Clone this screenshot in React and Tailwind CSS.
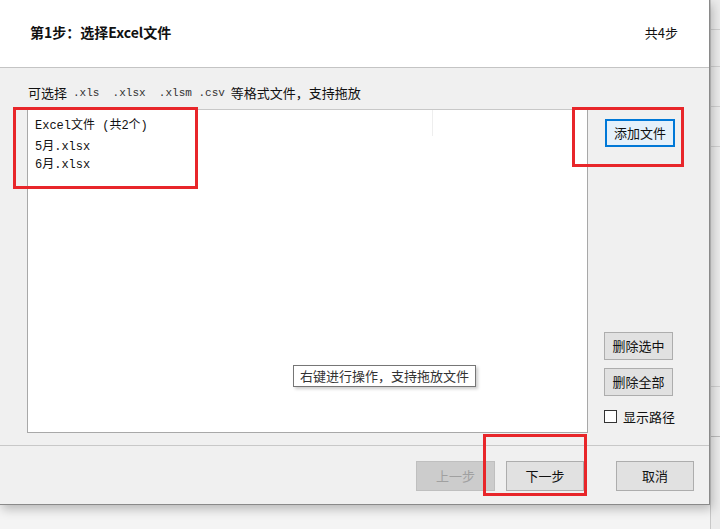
import React from 'react'

const cjk = { fontFamily: '"Noto Sans CJK SC", "Noto Sans", sans-serif' }
const mono = { fontFamily: '"Liberation Mono", "Noto Sans CJK SC", monospace' }

const WinButton = ({ children, className = '', disabled = false, focused = false }) => (
  <div
    className={`flex items-center justify-center border text-[13px] ${
      disabled
        ? 'bg-[#cccccc] border-[#bfbfbf] text-[#a0a0a0]'
        : focused
        ? 'bg-[#e5f1fb] border-[#0078d7] border-2 text-[#111]'
        : 'bg-[#e1e1e1] border-[#adadad] text-[#111]'
    } ${className}`}
  >
    {children}
  </div>
)

const App = () => {
  return (
    <div className="relative w-[720px] h-[529px] bg-[#f4f4f4] overflow-hidden" style={cjk}>
      {/* spreadsheet edge behind dialog */}
      <div className="absolute right-0 top-0 w-[10px] h-full bg-[#ececec] border-l border-[#c8c8c8]">
        <div className="h-[30px] border-b border-[#d0d0d0]" />
        <div className="h-[37px] border-b border-[#d0d0d0]" />
        <div className="h-[40px] border-b border-[#d0d0d0]" />
        <div className="h-[40px] border-b border-[#d0d0d0]" />
        <div className="h-[240px] border-b border-[#d0d0d0]" />
        <div className="h-[50px] border-b border-[#bbbbbb]" />
      </div>

      {/* dialog window */}
      <div className="relative w-[710px] h-[505px] flex flex-col bg-[#f0f0f0] border-r border-b border-[#8a8a8a] shadow-[2px_4px_10px_rgba(0,0,0,0.25)]">
        {/* header */}
        <div className="h-[68px] bg-white border-b border-[#c4c4c4] flex items-center justify-between pl-[30px] pr-[31px] pb-[2px]">
          <span className="text-[14px] font-bold text-[#111]">第1步：选择Excel文件</span>
          <span className="text-[13px] text-[#111]">共4步</span>
        </div>

        {/* body */}
        <div className="flex-1 flex flex-col pt-[15px]">
          <div className="pl-[28px] text-[13px] text-[#111] flex items-center gap-[6px] h-[20px]">
            <span>可选择</span>
            <span className="text-[11px] text-[#333]" style={mono}>.xls&nbsp; .xlsx&nbsp; .xlsm .csv</span>
            <span>等格式文件，支持拖放</span>
          </div>

          <div className="flex mt-[6px]">
            {/* file list */}
            <div className="relative ml-[27px] w-[561px] h-[324px] bg-white border border-[#a8a8a8] border-t-[#c8c8c8]">
              <div className="absolute left-[404px] top-0 w-px h-[26px] bg-[#eeeeee]" />
              <div className="pl-[7px] pt-[7px] text-[12px] text-[#111] leading-[18px]" style={mono}>
                <div className="mb-[3px]">Excel文件 (共2个)</div>
                <div>5月.xlsx</div>
                <div>6月.xlsx</div>
              </div>
              <div className="absolute left-[265px] top-[255px] h-[22px] px-[6px] flex items-center bg-white border border-[#767676] text-[13px] text-[#333] shadow-[2px_2px_3px_rgba(0,0,0,0.2)]">
                右键进行操作，支持拖放文件
              </div>
            </div>

            {/* right column */}
            <div className="flex flex-col pl-[16px]">
              <WinButton focused className="w-[70px] h-[28px] mt-[10px] ml-[1px]">添加文件</WinButton>
              <div className="flex-1" />
              <WinButton className="w-[69px] h-[28px]">删除选中</WinButton>
              <WinButton className="w-[69px] h-[28px] mt-[8px]">删除全部</WinButton>
              <div className="flex items-center gap-[6px] mt-[11px] mb-[7px]">
                <div className="w-[13px] h-[13px] bg-white border border-[#333]" />
                <span className="text-[13px] text-[#111]">显示路径</span>
              </div>
            </div>
          </div>
        </div>

        {/* footer */}
        <div className="h-[59px] border-t border-[#c8c8c8] flex items-start pt-[15px]">
          <WinButton disabled className="ml-[416px] w-[79px] h-[30px]">上一步</WinButton>
          <WinButton className="ml-[11px] w-[78px] h-[30px]">下一步</WinButton>
          <WinButton className="ml-[32px] w-[78px] h-[30px]">取消</WinButton>
        </div>
      </div>

      {/* red annotation boxes */}
      <div className="absolute left-[13px] top-[107px] w-[185px] h-[82px] border-[3px] border-[#e8262a]" />
      <div className="absolute left-[572px] top-[107px] w-[112px] h-[60px] border-[3px] border-[#e8262a]" />
      <div className="absolute left-[483px] top-[434px] w-[104px] h-[62px] border-[3px] border-[#e8262a]" />
    </div>
  )
}

export default App
